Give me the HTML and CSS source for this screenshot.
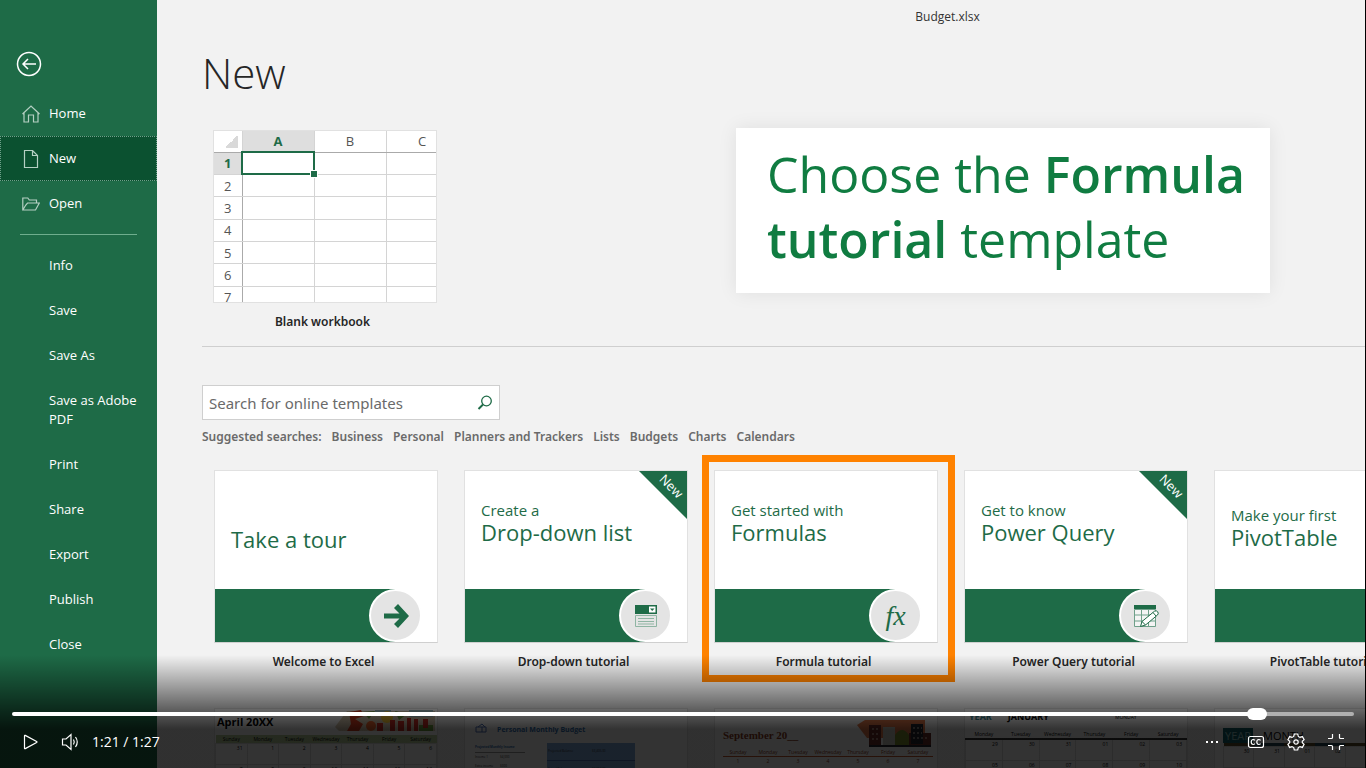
FILE: index.html
```html
<!DOCTYPE html>
<html lang="en">
<head>
  <meta charset="UTF-8">
  <meta name="viewport" content="width=device-width, initial-scale=1.0">
  <title>Budget.xlsx</title>
  <link rel="stylesheet" href="styles.css">
</head>
<body>
  <div class="player">
    <!-- sidebar -->
    <nav class="sidebar">
      <button type="button" class="back-btn" aria-label="Back">
        <svg width="26" height="26" viewBox="0 0 26 26"><circle cx="13" cy="13" r="11.5"/><path d="M20 13H7M12 8l-5 5 5 5"/></svg>
      </button>
      <a href="#" class="nav-item">
        <svg class="nav-icon" width="18" height="18" viewBox="0 0 18 18"><path d="M.5 9L9 1l8.500 8M2 7.500V17h4.500v-7h5v7H16V7.500"/></svg>
        Home
      </a>
      <a href="#" class="nav-item active">
        <svg class="nav-icon" width="18" height="18" viewBox="0 0 18 18"><path d="M2.500.5h8l5 5v12h-13zM10.500.5v5h5"/></svg>
        New
      </a>
      <a href="#" class="nav-item">
        <svg class="nav-icon" width="18" height="18" viewBox="0 0 18 18"><path d="M.8 15V3h5l1.500 2h7.200v3M.8 15h12.700L17.300 8H5.500L3.800 10z"/></svg>
        Open
      </a>
      <hr class="nav-line">
      <a href="#" class="nav-item">Info</a>
      <a href="#" class="nav-item">Save</a>
      <a href="#" class="nav-item">Save As</a>
      <a href="#" class="nav-item">Save as Adobe PDF</a>
      <a href="#" class="nav-item">Print</a>
      <a href="#" class="nav-item">Share</a>
      <a href="#" class="nav-item">Export</a>
      <a href="#" class="nav-item">Publish</a>
      <a href="#" class="nav-item">Close</a>
    </nav>

    <!-- new page -->
    <main class="main">
      <div class="titlebar">Budget.xlsx</div>
      <h1>New</h1>
      <div class="blank">
        <a href="#" class="card">
          <div class="thumb">
            <table class="sheet">
              <tr class="sheet-head"><th class="corner"></th><th class="picked">A</th><th>B</th><th>C</th></tr>
              <tr><th class="picked">1</th><td class="cell"></td><td></td><td></td></tr>
              <tr><th>2</th><td></td><td></td><td></td></tr>
              <tr><th>3</th><td></td><td></td><td></td></tr>
              <tr><th>4</th><td></td><td></td><td></td></tr>
              <tr><th>5</th><td></td><td></td><td></td></tr>
              <tr><th>6</th><td></td><td></td><td></td></tr>
              <tr><th>7</th><td></td><td></td><td></td></tr>
            </table>
          </div>
          <span class="caption">Blank workbook</span>
        </a>
      </div>

      <form class="search">
        <input type="text" class="search-input" placeholder="Search for online templates" aria-label="Search for online templates">
        <button type="button" class="search-btn" aria-label="Search">
          <svg width="16" height="16" viewBox="0 0 16 16"><circle cx="9.500" cy="6" r="4.800"/><path class="handle" d="M6 9.500L1.500 14"/></svg>
        </button>
      </form>
      <div class="suggested">
        <span>Suggested searches:</span>
        <a href="#">Business</a>
        <a href="#">Personal</a>
        <a href="#">Planners and Trackers</a>
        <a href="#">Lists</a>
        <a href="#">Budgets</a>
        <a href="#">Charts</a>
        <a href="#">Calendars</a>
      </div>

      <div class="cards">
        <a href="#" class="card">
          <div class="thumb tutorial">
            <div class="tutorial-text"><strong>Take a tour</strong></div>
            <div class="band"><span class="badge">
              <svg width="28" height="28" viewBox="0 0 28 28"><path fill="#1e6b47" d="M2 11.500h15.500L12 6l4-4 11 12-11 12-4-4 5.500-5.500H2z"/></svg>
            </span></div>
          </div>
          <span class="caption">Welcome to Excel</span>
        </a>
        <a href="#" class="card">
          <div class="thumb tutorial">
            <div class="ribbon"><span>New</span></div>
            <div class="tutorial-text"><small>Create a</small><strong>Drop-down list</strong></div>
            <div class="band"><span class="badge">
              <svg width="24" height="24" viewBox="0 0 24 24"><path fill="#1e6b47" d="M1 1h22v9H1z"/><path fill="#fff" d="M15 2.500h6.500v6H15z"/><path fill="#1e6b47" d="M16 4.500h4.500L18.200 7z"/><path fill="none" stroke="#8fb5a3" d="M1.500 11.500h21v11h-21zM4 14.500h16M4 17.500h16M4 20h16"/></svg>
            </span></div>
          </div>
          <span class="caption">Drop-down tutorial</span>
        </a>
        <a href="#" class="card chosen">
          <div class="thumb tutorial">
            <div class="tutorial-text"><small>Get started with</small><strong>Formulas</strong></div>
            <div class="band"><span class="badge fx">fx</span></div>
          </div>
          <span class="caption">Formula tutorial</span>
        </a>
        <a href="#" class="card">
          <div class="thumb tutorial">
            <div class="ribbon"><span>New</span></div>
            <div class="tutorial-text"><small>Get to know</small><strong>Power Query</strong></div>
            <div class="band"><span class="badge">
              <svg width="26" height="24" viewBox="0 0 26 24"><path fill="#1e6b47" d="M1 1h22v4H1z"/><path fill="#f4f4f4" stroke="#6fa08a" d="M1.500 5.500h21v17h-21zM1.500 11h21M1.500 17h21M8.500 5.500v17M15.500 5.500v17"/><path fill="#fff" stroke="#1e6b47" d="M7.500 22.500l1.500-5L21.500 7.200q2-1 3.200.6t-.2 3.200L12.500 21zM9 17.500l3.500 3.500M20 8.500l3 3.500"/></svg>
            </span></div>
          </div>
          <span class="caption">Power Query tutorial</span>
        </a>
        <a href="#" class="card">
          <div class="thumb tutorial">
            <div class="tutorial-text low"><small>Make your first</small><strong>PivotTable</strong></div>
            <div class="band"></div>
          </div>
          <span class="caption">PivotTable tutorial</span>
        </a>
      </div>

      <div class="cards templates">
        <div class="thumb april">
          <div class="cal-top"><b>April 20XX</b>
            <svg class="art" width="100" height="24" viewBox="0 0 100 24"><path fill="#d8c9b0" d="M0 18L12 2h88v20H4z"/><path fill="#9dbcc0" d="M40 1h16v6H40zM74 1h24v7H74z"/><path fill="#d23a1e" d="M14 3l12-2 3 6-9 3 8 5-4 7H12l4-7z"/><circle cx="36" cy="17" r="5" fill="#e8622a"/><path fill="#6a9a3c" d="M28 3l12-1-6 8zM60 2l12 3-8 6zM84 16h14v6H84z"/><circle cx="52" cy="8" r="6" fill="#f3c433"/><path fill="#c62b22" d="M42 14h6v8h-6zM55 11h5v11h-5zM63 12h6v10h-6zM72 9h4v13h-4zM79 10h4v12h-4zM88 10h5v9h-5z"/></svg>
          </div>
          <table class="cal">
            <tr><th>Sunday</th><th>Monday</th><th>Tuesday</th><th>Wednesday</th><th>Thursday</th><th>Friday</th><th>Saturday</th></tr>
            <tr><td>31</td><td>1</td><td>2</td><td>3</td><td>4</td><td>5</td><td>6</td></tr>
            <tr><td>7</td><td>8</td><td>9</td><td>10</td><td>11</td><td>12</td><td>13</td></tr>
          </table>
        </div>
        <div class="thumb budget">
          <div class="budget-title">
            <svg width="12" height="10" viewBox="0 0 12 10"><path fill="none" stroke="#4b6db5" d="M1 4h10v5H1zM3 4l4-3 3 3M7 4v5"/></svg>
            <b>Personal Monthly Budget</b>
          </div>
          <div class="budget-cols">
            <table class="income">
              <tr><th colspan="2">Projected Monthly Income</th></tr>
              <tr><td>Income 1</td><td>$4,000</td></tr>
              <tr><td>Extra income</td><td>$300</td></tr>
              <tr><td>Total income</td><td>$4,300</td></tr>
            </table>
            <table class="balance">
              <tr><td>Projected Balance</td><td>$3,405.00</td></tr>
              <tr><td>Actual Balance</td><td>$3,064.00</td></tr>
            </table>
          </div>
        </div>
        <div class="thumb september">
          <div class="cal-top"><b>September 20__</b>
            <svg class="art" width="76" height="28" viewBox="0 0 76 28"><path fill="#e87a4a" d="M0 6L8 1h60v18H10z"/><path fill="#6b2b28" d="M12 6h12v20H12zM52 14h22v13H52z"/><path fill="#c9c6bf" d="M26 8h12v18H26z"/><path fill="#7d8f2e" d="M38 16q7-10 14 0v10H38z"/><path fill="#23252f" d="M54 5h12v20H54zM12 26h62v2H12z"/><path stroke="#e8d9c9" stroke-dasharray="2 2" d="M15 10h8M15 15h8M15 20h8M56 9h9M56 14h9M56 19h16"/></svg>
          </div>
          <table class="cal">
            <tr><th>Sunday</th><th>Monday</th><th>Tuesday</th><th>Wednesday</th><th>Thursday</th><th>Friday</th><th>Saturday</th></tr>
            <tr><td>1</td><td>2</td><td>3</td><td>4</td><td>5</td><td>6</td><td>7</td></tr>
          </table>
        </div>
        <div class="thumb january">
          <div class="cal-top"><b class="teal">YEAR</b><b>JANUARY</b><span>MONDAY</span></div>
          <table class="cal">
            <tr><th>Monday</th><th>Tuesday</th><th>Wednesday</th><th>Thursday</th><th>Friday</th><th>Saturday</th></tr>
            <tr><td>29</td><td>30</td><td>31</td><td>01</td><td>02</td><td>03</td></tr>
            <tr><td>05</td><td>06</td><td>07</td><td>08</td><td>09</td><td>10</td></tr>
          </table>
        </div>
        <div class="thumb month">
          <div class="cal-top"><span class="year">YEAR</span><span>MONTH</span></div>
          <table class="cal">
            <tr><th></th><th></th><th></th><th></th><th></th><th></th><th></th></tr>
            <tr><td>30</td><td>31</td><td>01</td><td>02</td><td>03</td><td>04</td><td>05</td></tr>
            <tr><td>06</td><td>07</td><td>08</td><td>09</td><td>10</td><td>11</td><td>12</td></tr>
          </table>
        </div>
      </div>
    </main>

    <div class="callout">Choose the <b>Formula tutorial</b> template</div>

    <!-- video controls -->
    <div class="controls">
      <input type="range" class="seek" min="0" max="87" step="0.1" value="81.3" aria-label="Seek" style="--played: 93.4%">
      <div class="control-row">
        <button type="button" aria-label="Play"><svg width="20" height="20" viewBox="0 0 20 20"><path d="M4.500 3.800v12.400q0 .8.800.4L16.600 10.600q.9-.6 0-1.200L5.300 3.400q-.8-.4-.8.4z"/></svg></button>
        <button type="button" aria-label="Volume"><svg width="20" height="20" viewBox="0 0 20 20"><path d="M2.500 7v6h3.500l5 4.500V2.500L6 7zM13.500 7.500q1.500 2.500 0 5M15.500 5q3.500 5 0 10"/></svg></button>
        <span class="time">1:21 / 1:27</span>
        <span class="spacer"></span>
        <button type="button" class="more-btn" aria-label="More"><svg width="20" height="20" viewBox="0 0 20 20"><path class="dots" d="M4 9h2v2H4zM9 9h2v2H9zM14 9h2v2h-2z"/></svg></button>
        <button type="button" aria-label="Captions"><svg width="20" height="20" viewBox="0 0 20 20"><rect x="2.500" y="4.500" width="15" height="11" rx="2"/><path d="M9 8.300q-.8-.8-1.800-.8Q5.200 7.700 5.200 10t2 2.500q1 0 1.800-.8M14.600 8.300q-.8-.8-1.800-.8-2 .2-2 2.500t2 2.500q1 0 1.800-.8"/></svg></button>
        <button type="button" aria-label="Settings"><svg width="20" height="20" viewBox="0 0 20 20"><circle cx="10" cy="10" r="2.200"/><path d="M8.300 2h3.400l.6 2.400 1.700 1 2.400-.8 1.700 3-1.800 1.600v1.600l1.800 1.600-1.700 3-2.400-.8-1.700 1-.6 2.400H8.300l-.6-2.400-1.700-1-2.400.8-1.700-3 1.800-1.600V9.200L1.900 7.600l1.700-3 2.400.8 1.700-1z"/></svg></button>
        <button type="button" aria-label="Exit full screen"><svg width="20" height="20" viewBox="0 0 20 20"><path d="M2 6.500h3.500q1 0 1-1V2M13.500 2v3.500q0 1 1 1H18M2 13.500h3.500q1 0 1 1V18M18 13.500h-3.500q-1 0-1 1V18"/></svg></button>
      </div>
    </div>
  </div>
</body>
</html>
```
FILE: styles.css
```css
* {
  box-sizing: border-box;
}
body {
  margin: 0;
  font-family: "Open Sans", "Noto Sans", sans-serif;
  font-size: 13px;
  background: #000;
  overflow: hidden;
}
a {
  color: inherit;
  text-decoration: none;
}
button {
  padding: 0;
  border: 0;
  background: none;
  cursor: pointer;
}
svg {
  display: block;
  flex-shrink: 0;
}
table {
  border-collapse: collapse;
  table-layout: fixed;
}
.player {
  position: relative;
  display: flex;
  height: 100vh;
  margin-right: 1px;
  background: #f2f2f2;
  overflow: hidden;
}

/* sidebar */
.sidebar {
  flex: 0 0 157px;
  padding-top: 51px;
  background: #1e6b47;
  color: #fff;
}
.back-btn {
  display: block;
  margin: 0 0 14px 16px;
}
.back-btn svg {
  fill: none;
  stroke: #fff;
  stroke-width: 1.5;
}
.nav-item {
  display: flex;
  align-items: center;
  padding: 13px 16px 13px 49px;
  line-height: 19px;
}
.nav-item.active {
  background: #0b5130;
  outline: 1px dotted #6fa08a;
  outline-offset: -1px;
}
.nav-icon {
  margin: 0 9px 0 -27px;
  fill: none;
  stroke: #b5d0c3;
  stroke-width: 1.2;
}
.nav-line {
  height: 1px;
  margin: 8px 20px;
  border: 0;
  background: #6fae8e;
}

/* new page */
.main {
  flex: 1;
  min-width: 0;
  padding-left: 45px;
  overflow: hidden;
}
.titlebar {
  padding-left: 328px;
  font-size: 12px;
  line-height: 34px;
  text-align: center;
  color: #333;
}
h1 {
  margin: 9px 0 27px;
  font-size: 42px;
  font-weight: 300;
  line-height: 60px;
  color: #262626;
}
.blank {
  padding: 0 0 15px 11px;
  border-bottom: 1px solid #cfcfcf;
}
.card {
  position: relative;
  display: flex;
  flex-direction: column;
  flex: 0 0 224px;
  width: 224px;
}
.thumb {
  position: relative;
  flex: 0 0 auto;
  width: 224px;
  height: 173px;
  background: #fff;
  border: 1px solid #e1e1e1;
  overflow: hidden;
}
.caption {
  padding: 10px 5px 0 0;
  font-family: "Noto Sans", sans-serif;
  font-size: 12px;
  font-weight: 600;
  line-height: 18px;
  text-align: center;
  color: #262626;
  white-space: nowrap;
}
.sheet {
  width: 244px;
  height: 178px;
}
.sheet th {
  width: 28px;
  padding: 0;
  font-size: 13px;
  font-weight: 400;
  line-height: 16px;
  color: #555;
  border-right: 1px solid #aaa;
  border-bottom: 1px solid #d4d4d4;
}
.sheet-head th {
  width: 72px;
  height: 21px;
  border-right-color: #d4d4d4;
  border-bottom-color: #aaa;
}
.sheet .corner {
  width: 28px;
  background: linear-gradient(135deg, transparent 50%, #d9d9d9 50%) 11px 4px / 13px 13px no-repeat;
}
.sheet .picked {
  background: #dedede;
  color: #1e6b47;
  font-weight: 700;
}
.sheet td {
  position: relative;
  padding: 0;
  border: 1px solid #d4d4d4;
}
.sheet .cell {
  outline: 2px solid #1e6b47;
  outline-offset: -1px;
}
.cell::after {
  content: "";
  position: absolute;
  right: -3px;
  bottom: -3px;
  width: 6px;
  height: 6px;
  background: #1e6b47;
  outline: 1px solid #fff;
}

/* search */
.search {
  display: flex;
  align-items: center;
  width: 298px;
  height: 35px;
  margin-top: 38px;
  padding-right: 6px;
  background: #fff;
  border: 1px solid #cfcfcf;
}
.search-input {
  flex: 1;
  min-width: 0;
  padding: 0 6px;
  border: 0;
  font: 15px "Noto Sans", sans-serif;
}
.search-input::placeholder {
  color: #6a6a6a;
}
.search-btn svg {
  fill: none;
  stroke: #1e6b47;
  stroke-width: 1.3;
}
.search-btn .handle {
  stroke-width: 2;
}
.suggested {
  display: flex;
  gap: 10px;
  padding-top: 8px;
  font-family: "Noto Sans", sans-serif;
  font-size: 12px;
  font-weight: 600;
  line-height: 18px;
  color: #6a6a6a;
  white-space: nowrap;
}

/* tutorials */
.cards {
  display: flex;
  gap: 26px;
  padding: 24px 0 0 12px;
}
.tutorial {
  display: flex;
  flex-direction: column;
  border-bottom-color: #cfcfcf;
}
.tutorial-text {
  display: flex;
  flex-direction: column;
  justify-content: center;
  flex: 1;
  padding: 0 16px 16px;
  color: #1e6b47;
  white-space: nowrap;
}
.tutorial-text strong {
  font-size: 22px;
  font-weight: 400;
  line-height: 24px;
}
.tutorial-text strong:first-child {
  padding-top: 34px;
}
.tutorial-text small {
  font-size: 15px;
  line-height: 20px;
}
.tutorial-text.low {
  padding-bottom: 6px;
}
.band {
  display: flex;
  justify-content: flex-end;
  flex: 0 0 53px;
  padding-right: 15px;
  background: linear-gradient(to right, #1e6b47 180px, #fff 180px);
}
.band:empty {
  background: #1e6b47;
}
.badge {
  display: flex;
  align-items: center;
  justify-content: center;
  width: 53px;
  height: 53px;
  border: 2px solid #fff;
  border-radius: 50%;
  background: #e4e4e4;
}
.badge.fx {
  font: italic 28px "Liberation Serif", serif;
  color: #1e6b47;
}
.ribbon {
  position: absolute;
  top: 0;
  right: 0;
  width: 48px;
  height: 48px;
  background: #1e6b47;
  clip-path: polygon(0 0, 100% 0, 100% 100%);
}
.ribbon span {
  position: absolute;
  top: 6px;
  right: 2px;
  font-size: 13px;
  line-height: 18px;
  color: #fff;
  transform: rotate(45deg);
}
.chosen::after {
  content: "";
  position: absolute;
  inset: -15px -17px -11px -12px;
  border: 7px solid #ff8200;
}

/* templates below the fold */
.templates {
  padding-top: 37px;
}
.templates .thumb {
  font-size: 5px;
}
.cal-top {
  display: flex;
  justify-content: space-between;
  white-space: nowrap;
}
.cal {
  width: 100%;
}
.cal th {
  font-weight: 400;
}
.cal td {
  height: 21px;
  padding: 1px 4px;
  text-align: right;
  vertical-align: top;
  border: 1px solid #ddd;
}
.april .cal-top {
  height: 26px;
  padding: 0 2px;
  font-size: 11px;
  line-height: 26px;
}
.april th {
  background: #b9cf9c;
}
.budget {
  padding: 14px 10px;
  color: #333;
}
.budget-title {
  display: flex;
  gap: 10px;
  font-size: 7px;
  line-height: 14px;
  color: #2f6eb0;
}
.budget-cols {
  display: flex;
  gap: 22px;
  padding-top: 6px;
}
.income {
  width: 50px;
  font-size: 3px;
  line-height: 5px;
  white-space: nowrap;
}
.income th {
  padding: 0;
  text-align: left;
  color: #2f6eb0;
  border-bottom: 1px solid #999;
}
.income td {
  padding: 0;
}
.balance {
  width: 88px;
  height: 36px;
  font-size: 3px;
  background: #7fa9dc;
}
.balance td {
  border-bottom: 1px solid #4b6db5;
}
.september {
  padding: 10px 4px 0 8px;
  color: #8c3b1c;
}
.september .cal-top {
  height: 29px;
  font: 11px/32px "Liberation Serif", serif;
}
.september th {
  border-bottom: 1px solid #c5572a;
}
.september td {
  border: 0;
  text-align: center;
}
.january .cal-top {
  justify-content: flex-start;
  gap: 16px;
  height: 21px;
  padding-left: 4px;
  font-size: 9px;
  line-height: 16px;
}
.january .cal-top span {
  padding-left: 50px;
  font-size: 5px;
}
.january th {
  border-bottom: 2px solid #333;
}
.teal {
  color: #3d8a94;
}
.month {
  padding-left: 8px;
}
.month .cal-top {
  justify-content: flex-start;
  gap: 10px;
  padding-top: 19px;
  font-size: 11px;
  line-height: 15px;
}
.month .year {
  padding: 0 2px;
  background: #106068;
  color: #9cc;
}
.month th {
  height: 3px;
  padding: 0;
  background: #245;
}
.month th:nth-child(odd) {
  background: #5a4a28;
}

/* callout over the page */
.callout {
  position: absolute;
  top: 128px;
  right: 95px;
  width: 534px;
  padding: 14px 20px 21px 31px;
  background: #fff;
  box-shadow: 0 0 18px rgba(0, 0, 0, 0.08);
  font-size: 50px;
  line-height: 65px;
  color: #107c41;
}
.callout b {
  font-weight: 600;
}

/* video controls */
.controls {
  position: absolute;
  left: 0;
  right: 0;
  bottom: 0;
  height: 113px;
  padding: 53px 11px 0 12px;
  background: linear-gradient(rgba(0, 0, 0, 0), rgba(0, 0, 0, 0.28) 25px, rgba(0, 0, 0, 0.62) 56px, rgba(0, 0, 0, 0.8) 74px);
}
.seek {
  appearance: none;
  display: block;
  width: 100%;
  height: 12px;
  margin: 0;
  background: none;
}
.seek::-webkit-slider-runnable-track {
  height: 4px;
  border-radius: 2px;
  background: linear-gradient(to right, #fff var(--played), #b0b0b0 var(--played));
}
.seek::-webkit-slider-thumb {
  appearance: none;
  width: 20px;
  height: 12px;
  margin-top: -4px;
  border-radius: 6px;
  background: #fff;
}
.control-row {
  display: flex;
  align-items: center;
  gap: 20px;
  padding: 12px 8px 0;
}
.control-row svg {
  fill: none;
  stroke: #fff;
  stroke-width: 1.2;
}
.control-row .dots {
  fill: #fff;
  stroke: none;
}
.more-btn {
  margin-right: 4px;
}
.time {
  margin-left: -8px;
  font-size: 14px;
  line-height: 20px;
  color: #fff;
}
.spacer {
  flex: 1;
}
```
